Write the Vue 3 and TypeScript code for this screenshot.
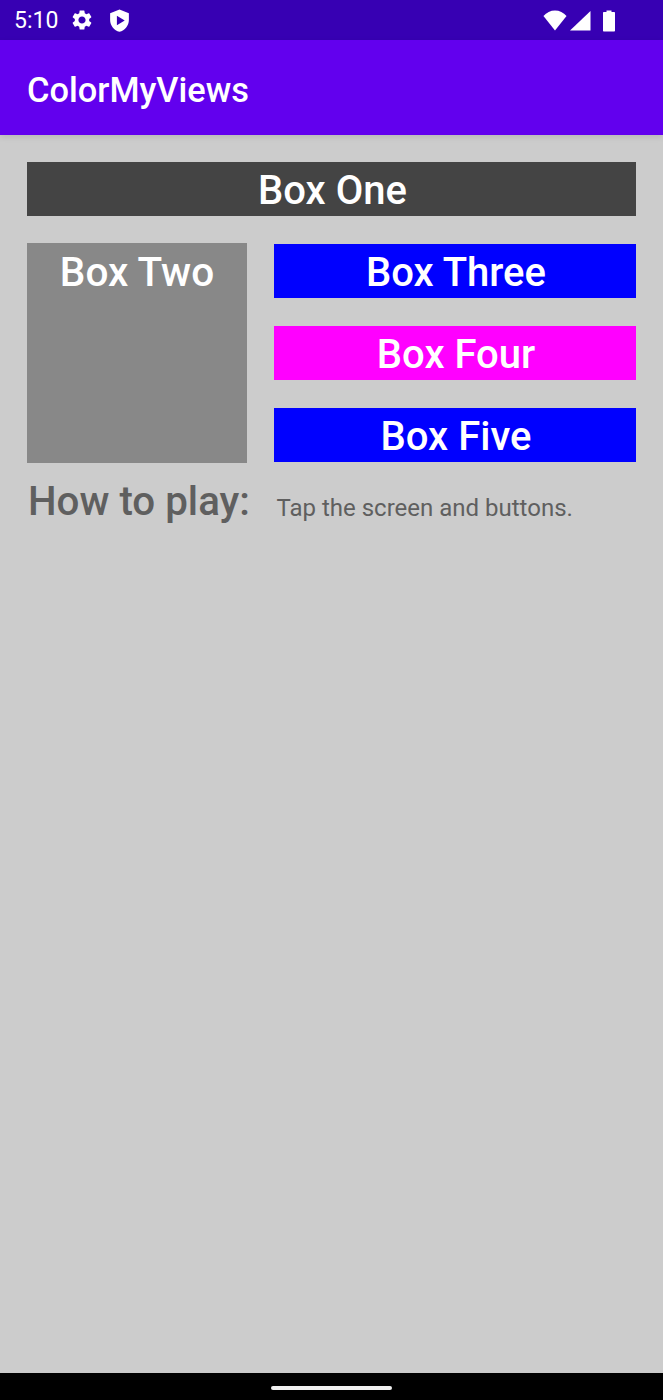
<script setup lang="ts">
const sideBoxes = [
  { label: 'Box Three', color: '#0000ff' },
  { label: 'Box Four', color: '#ff00ff' },
  { label: 'Box Five', color: '#0000ff' },
]
</script>

<template>
  <div class="screen">
    <div class="status-bar">
      <div class="status-left">
        <span class="clock">5:10</span>
        <svg class="gear" viewBox="0 0 24 24" fill="#fff">
          <path d="M19.14 12.94c.04-.3.06-.61.06-.94 0-.32-.02-.64-.07-.94l2.03-1.58a.49.49 0 0 0 .12-.61l-1.92-3.32a.488.488 0 0 0-.59-.22l-2.39.96c-.5-.38-1.03-.7-1.62-.94l-.36-2.54a.484.484 0 0 0-.48-.41h-3.84c-.24 0-.43.17-.47.41l-.36 2.54c-.59.24-1.13.57-1.62.94l-2.39-.96c-.22-.08-.47 0-.59.22L2.74 8.87c-.12.21-.08.47.12.61l2.03 1.58c-.05.3-.09.63-.09.94s.02.64.07.94l-2.03 1.58a.49.49 0 0 0-.12.61l1.92 3.32c.12.22.37.29.59.22l2.39-.96c.5.38 1.03.7 1.62.94l.36 2.54c.05.24.24.41.48.41h3.84c.24 0 .44-.17.47-.41l.36-2.54c.59-.24 1.13-.56 1.62-.94l2.39.96c.22.08.47 0 .59-.22l1.92-3.32c.12-.22.07-.47-.12-.61l-2.01-1.58zM12 15.6c-1.98 0-3.6-1.62-3.6-3.6s1.62-3.6 3.6-3.6 3.6 1.62 3.6 3.6-1.62 3.6-3.6 3.6z" />
        </svg>
        <svg class="shield" viewBox="0 0 24 24" fill="#fff">
          <path fill-rule="evenodd" d="M12 1.500 3 5v6.500c0 5.400 3.800 10.100 9 11.400 5.200-1.300 9-6 9-11.400V5l-9-3.500zM9.500 7.500l7.500 4.500-7.500 4.500z" />
        </svg>
      </div>
      <div class="status-right">
        <svg class="wifi" viewBox="0 0 26 21" preserveAspectRatio="none" fill="#fff">
          <path d="M13 20.500 .5 6C3.800 2.500 8.200.5 13 .5s9.200 2 12.500 5.500z" />
        </svg>
        <svg class="signal" viewBox="0 0 22 21" fill="#fff">
          <path d="M21.500 1v19.500H1z" />
        </svg>
        <svg class="battery" viewBox="0 0 14 24" fill="#fff">
          <path d="M4.500 2.500h5V4h2.500c.6 0 1 .4 1 1v17.500c0 .6-.4 1-1 1H2c-.6 0-1-.4-1-1V5c0-.6.4-1 1-1h2.500z" />
        </svg>
      </div>
    </div>

    <header class="app-bar">ColorMyViews</header>

    <main class="content">
      <div class="box box-one">Box One</div>

      <div class="middle">
        <div class="box box-two">Box Two</div>
        <div class="side">
          <div
            v-for="box in sideBoxes"
            :key="box.label"
            class="box side-box"
            :style="{ background: box.color }"
          >
            {{ box.label }}
          </div>
        </div>
      </div>

      <div class="how-to">
        <span class="how-label">How to play:</span>
        <span class="how-text">Tap the screen and buttons.</span>
      </div>
    </main>

    <footer class="nav-bar">
      <span class="home-pill"></span>
    </footer>
  </div>
</template>

<style>
html,
body {
  margin: 0;
  background: #cccccc;
}
</style>

<style scoped>
.screen {
  width: 663px;
  height: 1400px;
  display: flex;
  flex-direction: column;
  overflow: hidden;
  font-family: Roboto, "Liberation Sans", sans-serif;
  background: #cccccc;
}

.status-bar {
  height: 40px;
  flex-shrink: 0;
  box-sizing: border-box;
  padding: 0 47px 0 14px;
  display: flex;
  align-items: center;
  justify-content: space-between;
  background: #3700b3;
  color: #fff;
}

.status-left {
  display: flex;
  align-items: center;
}

.clock {
  font-size: 23px;
  width: 56px;
}

.gear {
  width: 24px;
  height: 24px;
}

.shield {
  width: 25px;
  height: 25px;
  margin-left: 13px;
}

.status-right {
  display: flex;
  align-items: center;
}

.wifi {
  width: 24px;
  height: 21px;
}

.signal {
  width: 22px;
  height: 21px;
  margin-left: 2px;
}

.battery {
  width: 14px;
  height: 24px;
  margin-left: 11px;
}

.app-bar {
  height: 95px;
  flex-shrink: 0;
  box-sizing: border-box;
  padding: 4px 27px 0;
  display: flex;
  align-items: center;
  background: #6200ee;
  color: #fff;
  font-size: 34.400px;
  font-weight: 500;
  position: relative;
  box-shadow: 0 2px 6px rgba(0, 0, 0, 0.1);
}

.content {
  flex: 1;
  padding: 27px 27px 0;
  background: #cccccc;
}

.box {
  color: #fff;
  font-size: 40px;
  font-weight: 500;
  text-align: center;
  line-height: 57px;
}

.box-one {
  height: 54px;
  padding-left: 2px;
  box-sizing: border-box;
  background: #444444;
}

.middle {
  display: flex;
  gap: 27px;
  margin-top: 27px;
}

.box-two {
  width: 220px;
  height: 220px;
  font-size: 40.500px;
  line-height: 58px;
  background: #888888;
}

.side {
  flex: 1;
  height: 220px;
  display: flex;
  flex-direction: column;
  justify-content: space-between;
  padding: 1px 0;
  box-sizing: border-box;
}

.side-box {
  height: 54px;
  padding-left: 2px;
  box-sizing: border-box;
  overflow: hidden;
}

.how-to {
  display: flex;
  align-items: flex-start;
  margin-top: 15px;
  color: #5f5f5f;
}

.how-label {
  font-size: 40.300px;
  font-weight: 500;
  width: 249px;
  padding-left: 1px;
  box-sizing: border-box;
  white-space: nowrap;
}

.how-text {
  font-size: 24px;
  margin: 16px 0 0 0.500px;
}

.nav-bar {
  height: 27px;
  flex-shrink: 0;
  display: flex;
  align-items: flex-start;
  justify-content: center;
  background: #000;
}

.home-pill {
  width: 121px;
  height: 3.500px;
  margin-top: 13px;
  border-radius: 2px;
  background: #f0f0f0;
}
</style>
